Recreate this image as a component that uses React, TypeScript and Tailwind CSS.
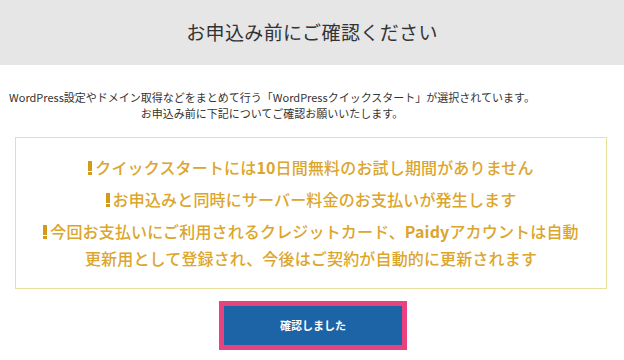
function Bang() {
  return (
    <svg width="4" height="14" viewBox="0 0 4 14" className="mr-[3px] inline-block align-[-1px]" fill="#d59b17">
      <rect x="0" y="0" width="4" height="10" />
      <rect x="0" y="11" width="4" height="3" />
    </svg>
  )
}

export default function App() {
  const notes = [
    <>クイックスタートには<b className="font-bold">10</b>日間無料のお試し期間がありません</>,
    <>お申込みと同時にサーバー料金のお支払いが発生します</>,
    <>
      今回お支払いにご利用されるクレジットカード、<b className="font-bold">Paidy</b>アカウントは自動
      <br />
      更新用として登録され、今後はご契約が自動的に更新されます
    </>,
  ]

  return (
    <div
      className="h-[360px] w-[624px] overflow-hidden bg-white text-[#333]"
      style={{ fontFamily: '"Noto Sans CJK JP", "Noto Sans", sans-serif' }}
    >
      <div className="flex h-[65px] items-center justify-center bg-[#e6e6e6]">
        <h1 className="text-[19px] font-normal tracking-[0.02em] text-[#333]">お申込み前にご確認ください</h1>
      </div>

      <div className="mr-[80px] mt-[24px] text-center text-[11px] leading-[16px]">
        <p>WordPress設定やドメイン取得などをまとめて行う「WordPressクイックスタート」が選択されています。</p>
        <p>お申込み前に下記についてご確認お願いいたします。</p>
      </div>

      <div className="ml-[15px] mt-[16px] flex w-[592px] flex-col gap-[5px] border border-[#e6e19c] py-4 text-center text-[16px] font-medium leading-[27px] tracking-[0.01em] text-[#dca52c]">
        {notes.map((n, i) => (
          <p key={i}>
            <Bang />
            {n}
          </p>
        ))}
      </div>

      <div className="mt-[12px] flex justify-center">
        <button className="ml-[2px] h-[49px] w-[188px] border-[5px] border-[#e8437e] bg-[#1d64a6] text-[11px] font-bold text-white">
          確認しました
        </button>
      </div>
    </div>
  )
}
